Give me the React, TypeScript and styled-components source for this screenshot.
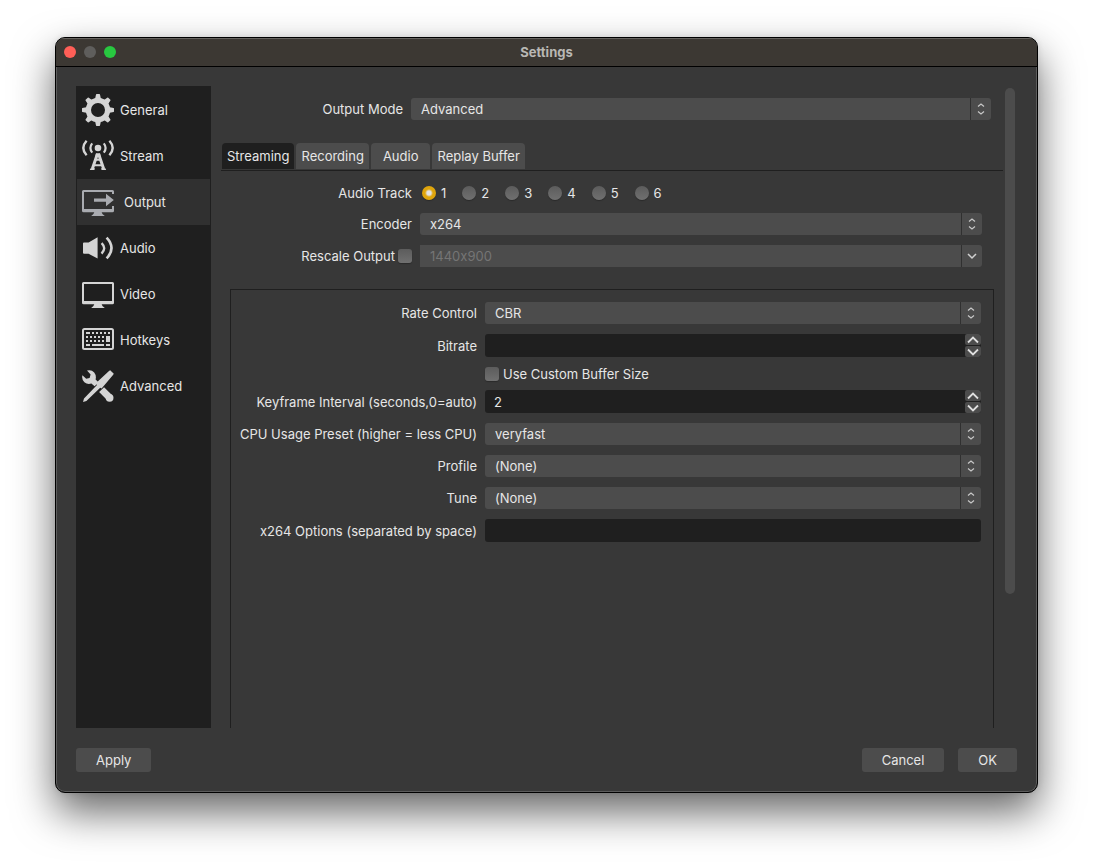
import React from "react";
import styled, { createGlobalStyle, css } from "styled-components";

const GlobalStyle = createGlobalStyle`
  *, *::before, *::after { box-sizing: border-box; }
  html, body { margin: 0; background: #fff; }
  body, button, input, select {
    font-family: Inter, "Liberation Sans", sans-serif;
    font-size: 13px;
    font-weight: 400;
    font-feature-settings: "calt" 0;
    line-height: 16px;
    color: #e6e6e6;
  }
`;

const Page = styled.div`
  display: flex;
  min-height: 100vh;
  padding: 37px 55px 73px;
  overflow: hidden;
`;

const Window = styled.main`
  flex: 1;
  min-width: 0;
  display: flex;
  flex-direction: column;
  background: #383838;
  border: 1px solid #000;
  border-radius: 10px;
  overflow: hidden;
  box-shadow:
    inset 0 0 0 1px #5c5c5c,
    0 19px 42px rgba(0, 0, 0, 0.6),
    0 0 6px rgba(0, 0, 0, 0.1);
`;

const TitleBar = styled.header`
  display: grid;
  grid-template-columns: 1fr auto 1fr;
  align-items: center;
  height: 29px;
  padding: 0 8px;
  background: #3c3833;
  border-bottom: 1px solid #000;
  box-shadow: inset 0 1px 0 #66635f;
`;

const Lights = styled.div`
  display: flex;
  gap: 8px;
`;

const Light = styled.button<{ $color: string }>`
  width: 12px;
  height: 12px;
  padding: 0;
  border: 0;
  border-radius: 50%;
  background: ${(p) => p.$color};
`;

const Title = styled.h1`
  margin: 0;
  font-size: 13px;
  font-weight: 700;
  line-height: 16px;
  color: #b9b7b4;
`;

const Body = styled.div`
  flex: 1;
  display: flex;
  gap: 10px;
  padding: 19px 20px 0;
`;

const Sidebar = styled.nav`
  flex: none;
  width: 135px;
  padding: 1px;
  background: #1f1f1f;
`;

const NavItem = styled.button<{ $active?: boolean }>`
  display: flex;
  align-items: center;
  gap: ${(p) => (p.$active ? "10px" : "6px")};
  width: 100%;
  height: 46px;
  padding: 0 5px;
  border: 0;
  text-align: left;
  background: ${(p) => (p.$active ? "#303030" : "transparent")};
  svg { flex: none; color: ${(p) => (p.$active ? "#a9abb0" : "#d4d4d4")}; }
`;

const Content = styled.section`
  flex: 1;
  min-width: 0;
  display: flex;
  gap: 2px;
`;

const Form = styled.div`
  flex: 1;
  min-width: 0;
  display: flex;
  flex-direction: column;
`;

const ScrollTrack = styled.div`
  flex: none;
  width: 12px;
  padding-top: 2px;
`;

const ScrollThumb = styled.div`
  width: 10px;
  height: 79%;
  border-radius: 5px;
  background: #4c4c4c;
`;

const Row = styled.div<{ $label: number; $short?: boolean }>`
  display: grid;
  grid-template-columns: ${(p) => p.$label}px minmax(0, 1fr);
  column-gap: 8px;
  align-items: center;
  height: ${(p) => (p.$short ? "13px" : "auto")};
`;

const ModeArea = styled.div`
  padding: 12px 12px 23px 0;
`;

const labelText = css`
  text-align: right;
  white-space: nowrap;
`;

const Label = styled.label`
  ${labelText}
`;

const GroupLabel = styled.span`
  ${labelText}
`;

const CheckLabel = styled.label`
  display: flex;
  align-items: center;
  justify-content: flex-end;
  gap: 3px;
  white-space: nowrap;
`;

const BoxLabel = styled(CheckLabel)`
  grid-column: 2;
  justify-content: flex-start;
  gap: 4px;
  height: 14px;
`;

const Tabs = styled.div`
  display: flex;
  gap: 2px;
  padding: 0 1px 1px;
  border-bottom: 1px solid #1f1f1f;
`;

const Tab = styled.button<{ $active?: boolean; $wide?: boolean }>`
  height: 26px;
  padding: 0 ${(p) => (p.$wide ? "12px" : "5px")};
  border: 0;
  border-radius: 4px 4px 0 0;
  background: ${(p) => (p.$active ? "#1f1f1f" : "#4c4c4c")};
`;

const StreamArea = styled.div`
  display: flex;
  flex-direction: column;
  gap: 10px;
  padding: 12px 21px 22px 0;
`;

const Radios = styled.div`
  display: flex;
  gap: 16px;
  padding-left: 2px;
`;

const RadioLabel = styled.label`
  display: flex;
  align-items: center;
  gap: 5px;
  height: 20px;
`;

const toggle = css`
  appearance: none;
  flex: none;
  width: 14px;
  height: 14px;
  margin: 0;
  background: linear-gradient(#5c5c5c, #707070);
  box-shadow: 0 1px 1px rgba(0, 0, 0, 0.25);
`;

const Radio = styled.input`
  ${toggle}
  border-radius: 50%;
  &:checked { background: radial-gradient(circle, #e2e2e2 0 2px, #dfa50c 4px); }
`;

const Check = styled.input`
  ${toggle}
  border-radius: 3px;
`;

const SelectWrap = styled.div`
  display: grid;
  > * { grid-area: 1 / 1; }
`;

const SelectBox = styled.select`
  appearance: none;
  width: 100%;
  height: 22px;
  margin: 0;
  padding: 0 30px 0 10px;
  border: 0;
  border-radius: 3px;
  background: #4c4c4c;
  &:disabled {
    color: #757575;
    opacity: 1;
    border-radius: 0 3px 3px 0;
  }
`;

const SelectArrow = styled.span`
  display: flex;
  align-items: center;
  justify-content: center;
  justify-self: end;
  width: 21px;
  height: 22px;
  border-left: 1px solid #303030;
  pointer-events: none;
`;

const GroupBox = styled.div`
  flex: 1;
  display: flex;
  flex-direction: column;
  gap: 10px;
  margin: 0 9px;
  padding: 12px 12px 24px 0;
  border: 1px solid #1f1f1f;
  border-bottom: 0;
`;

const FieldWrap = styled.div`
  display: flex;
  height: 23px;
  border-radius: 3px;
  overflow: hidden;
  background: #1f1f1f;
`;

const Field = styled.input`
  flex: 1;
  min-width: 0;
  padding: 0 9px;
  border: 0;
  background: transparent;
`;

const Spinner = styled.div`
  display: flex;
  flex-direction: column;
  gap: 1px;
  width: 16px;
`;

const SpinButton = styled.button`
  display: flex;
  align-items: center;
  justify-content: center;
  flex: 1;
  min-height: 0;
  padding: 0;
  border: 0;
  border-radius: 2px;
  background: #4c4c4c;
`;

const Footer = styled.footer`
  display: flex;
  gap: 14px;
  padding: 20px;
`;

const Spacer = styled.div`
  flex: 1;
`;

const PushButton = styled.button`
  height: 24px;
  padding: 0 20px;
  border: 0;
  border-radius: 3px;
  background: #4c4c4c;
`;

const Icon = ({ children }: { children: React.ReactNode }) => (
  <svg width="32" height="32" viewBox="0 0 32 32" fill="currentColor" aria-hidden="true">
    {children}
  </svg>
);

const GearIcon = () => (
  <Icon>
    <circle cx="16" cy="16" r="9.6" fill="none" stroke="currentColor" strokeWidth="5.2" />
    {[0, 45, 90, 135, 180, 225, 270, 315].map((a) => (
      <path key={a} d="M11.2 5.8 13.2 4.2 14 .4Q14.1 0 14.5 0H17.5Q17.9 0 18 .4L18.8 4.2 20.8 5.8Z" transform={`rotate(${a} 16 16)`} />
    ))}
  </Icon>
);

const StreamIcon = () => (
  <Icon>
    <circle cx="16" cy="8" r="3.3" />
    <g fill="none" stroke="currentColor">
      <path d="M10.2 3.4Q6.6 8 10.2 12.6M21.8 3.4Q25.4 8 21.8 12.6" strokeWidth="2.2" />
      <path d="M4.6 .8Q-2 8 4.6 15.2M27.4 .8Q34 8 27.4 15.2" strokeWidth="2.4" />
      <path d="M15.4 14 10.3 29M16.6 14 21.7 29" strokeWidth="3" />
      <path d="M13 19.8H19M11.5 25.2H20.5" strokeWidth="2" />
    </g>
    <path d="M14 13.3H18L18.8 17H13.2ZM7.8 30 8.6 28.2H13L12.4 30ZM24.2 30 23.4 28.2H19L19.6 30Z" />
  </Icon>
);

const OutputIcon = () => (
  <Icon>
    <path d="M1.5 4H30.5Q32 4 32 5.5V8H30V6H2V23H30V20H32V24.8Q32 26.3 30.5 26.3H1.5Q0 26.3 0 24.8V5.5Q0 4 1.5 4Z" />
    <path d="M12 12.5H24V7.7L31.8 14 24 20.3V15.7H12ZM12.3 26H19.6Q20 28.8 22.8 30H9.2Q11.8 28.8 12.3 26Z" />
  </Icon>
);

const AudioIcon = () => (
  <Icon>
    <path d="M2 10.4H6.6L15.6 5.2V26.6L6.6 21.8H2Q1 21.8 1 20.8V11.4Q1 10.4 2 10.4Z" />
    <path d="M19.6 11.2Q24.8 16.3 19.6 21.6" fill="none" stroke="currentColor" strokeWidth="2.4" />
    <path d="M24.6 5.6Q34.4 16 24.6 26.4" fill="none" stroke="currentColor" strokeWidth="2.6" />
  </Icon>
);

const VideoIcon = () => (
  <Icon>
    <path fillRule="evenodd" d="M1.5 4H30.5Q32 4 32 5.5V24.8Q32 26.3 30.5 26.3H1.5Q0 26.3 0 24.8V5.5Q0 4 1.5 4ZM2 6V23H30V6Z" />
    <path d="M12.3 26H19.6Q20 28.8 22.8 30H9.2Q11.8 28.8 12.3 26Z" />
  </Icon>
);

const keys = [
  [4, 8, 4], [10, 8, 2], [14, 8, 2], [18, 8, 2], [22, 8, 2], [26, 8, 2],
  [4, 12, 2], [8, 12, 2], [12, 12, 2], [16, 12, 2], [20, 12, 2],
  [4, 16, 2], [8, 16, 2], [12, 16, 2], [16, 16, 2], [20, 16, 2],
  [4, 20, 4], [10, 20, 12], [24, 20, 4],
];

const KeyboardIcon = () => (
  <Icon>
    <rect x="1" y="5" width="30" height="20" rx="1.5" fill="none" stroke="currentColor" strokeWidth="2" />
    {keys.map(([x, y, w]) => (
      <rect key={`${x}-${y}`} x={x} y={y} width={w} height="2" />
    ))}
    <rect x="24" y="12" width="4" height="6" />
  </Icon>
);

const ToolsIcon = () => (
  <Icon>
    <path d="M5 .6Q9.4-.6 12.2 2.4Q14.6 5.4 13.6 9.4L16.6 12.4 12.6 16.2 9.4 13.4Q5.6 14.8 2.4 12.2Q-.6 9.2 .4 5.2L4.2 8.8 7.6 8 8.6 4.4Z" />
    <path d="M19.6 19.6 28 28" stroke="currentColor" strokeWidth="7" fill="none" />
    <circle cx="27.6" cy="27.8" r="3.9" />
    <path d="M27 1 28.2 .2 31.8 3.8 31 5 19.6 18.4 18.2 17.8 4.4 31 1 32 2 28.4 15 15 13.8 13.2Z" />
  </Icon>
);

const UpDown = () => (
  <svg width="8" height="14" viewBox="0 0 8 14" fill="none" stroke="#c8c8c8" strokeWidth="1.2" aria-hidden="true">
    <path d="M1 4.5 4 2 7 4.5M1 9.5 4 12 7 9.5" />
  </svg>
);

const Down = () => (
  <svg width="10" height="8" viewBox="0 0 10 8" fill="none" stroke="#d0d0d0" strokeWidth="1.5" aria-hidden="true">
    <path d="M1 2 5 6 9 2" />
  </svg>
);

const Chevron = ({ up }: { up?: boolean }) => (
  <svg width="12" height="8" viewBox="0 0 12 8" fill="none" stroke="#dedede" strokeWidth="1.8" aria-hidden="true">
    <path d={up ? "M1 6.5 6 1.5 11 6.5" : "M1 1.5 6 6.5 11 1.5"} />
  </svg>
);

const Select = ({ id, value, disabled }: { id: string; value: string; disabled?: boolean }) => (
  <SelectWrap>
    <SelectBox id={id} defaultValue={value} disabled={disabled} aria-label={disabled ? "Output resolution" : undefined}>
      <option value={value}>{value}</option>
    </SelectBox>
    <SelectArrow>{disabled ? <Down /> : <UpDown />}</SelectArrow>
  </SelectWrap>
);

const SelectRow = ({ label, id, value, width }: { label: string; id: string; value: string; width: number }) => (
  <Row $label={width}>
    <Label htmlFor={id}>{label}</Label>
    <Select id={id} value={value} />
  </Row>
);

const FieldRow = ({ label, id, value, spin }: { label: string; id: string; value: string; spin?: boolean }) => (
  <Row $label={246}>
    <Label htmlFor={id}>{label}</Label>
    <FieldWrap>
      <Field id={id} defaultValue={value} inputMode={spin ? "numeric" : "text"} />
      {spin && (
        <Spinner>
          <SpinButton aria-label={`Increase ${label}`}><Chevron up /></SpinButton>
          <SpinButton aria-label={`Decrease ${label}`}><Chevron /></SpinButton>
        </Spinner>
      )}
    </FieldWrap>
  </Row>
);

const sections = [
  { name: "General", Glyph: GearIcon },
  { name: "Stream", Glyph: StreamIcon },
  { name: "Output", Glyph: OutputIcon },
  { name: "Audio", Glyph: AudioIcon },
  { name: "Video", Glyph: VideoIcon },
  { name: "Hotkeys", Glyph: KeyboardIcon },
  { name: "Advanced", Glyph: ToolsIcon },
];

export default function App() {
  return (
    <>
      <GlobalStyle />
      <Page>
        <Window>
          <TitleBar>
            <Lights>
              <Light $color="#ff5f57" aria-label="Close" />
              <Light $color="#5f5e5c" aria-label="Minimize" />
              <Light $color="#28c840" aria-label="Zoom" />
            </Lights>
            <Title>Settings</Title>
          </TitleBar>
          <Body>
            <Sidebar>
              {sections.map(({ name, Glyph }) => (
                <NavItem key={name} $active={name === "Output"}>
                  <Glyph />
                  {name}
                </NavItem>
              ))}
            </Sidebar>
            <Content>
              <Form>
                <ModeArea>
                  <SelectRow label="Output Mode" id="mode" value="Advanced" width={182} />
                </ModeArea>
                <Tabs role="tablist">
                  <Tab role="tab" aria-selected $active>Streaming</Tab>
                  <Tab role="tab">Recording</Tab>
                  <Tab role="tab" $wide>Audio</Tab>
                  <Tab role="tab">Replay Buffer</Tab>
                </Tabs>
                <StreamArea>
                  <Row $label={191}>
                    <GroupLabel id="track">Audio Track</GroupLabel>
                    <Radios role="radiogroup" aria-labelledby="track">
                      {[1, 2, 3, 4, 5, 6].map((n) => (
                        <RadioLabel key={n}>
                          <Radio type="radio" name="track" defaultChecked={n === 1} />
                          {n}
                        </RadioLabel>
                      ))}
                    </Radios>
                  </Row>
                  <SelectRow label="Encoder" id="encoder" value="x264" width={191} />
                  <Row $label={191}>
                    <CheckLabel>
                      Rescale Output
                      <Check type="checkbox" />
                    </CheckLabel>
                    <Select id="rescale" value="1440x900" disabled />
                  </Row>
                </StreamArea>
                <GroupBox>
                  <SelectRow label="Rate Control" id="rate" value="CBR" width={246} />
                  <FieldRow label="Bitrate" id="bitrate" value="" spin />
                  <Row $label={246} $short>
                    <BoxLabel>
                      <Check type="checkbox" />
                      Use Custom Buffer Size
                    </BoxLabel>
                  </Row>
                  <FieldRow label="Keyframe Interval (seconds,0=auto)" id="keyframe" value="2" spin />
                  <SelectRow label="CPU Usage Preset (higher = less CPU)" id="preset" value="veryfast" width={246} />
                  <SelectRow label="Profile" id="profile" value="(None)" width={246} />
                  <SelectRow label="Tune" id="tune" value="(None)" width={246} />
                  <FieldRow label="x264 Options (separated by space)" id="options" value="" />
                </GroupBox>
              </Form>
              <ScrollTrack>
                <ScrollThumb />
              </ScrollTrack>
            </Content>
          </Body>
          <Footer>
            <PushButton>Apply</PushButton>
            <Spacer />
            <PushButton>Cancel</PushButton>
            <PushButton>OK</PushButton>
          </Footer>
        </Window>
      </Page>
    </>
  );
}
